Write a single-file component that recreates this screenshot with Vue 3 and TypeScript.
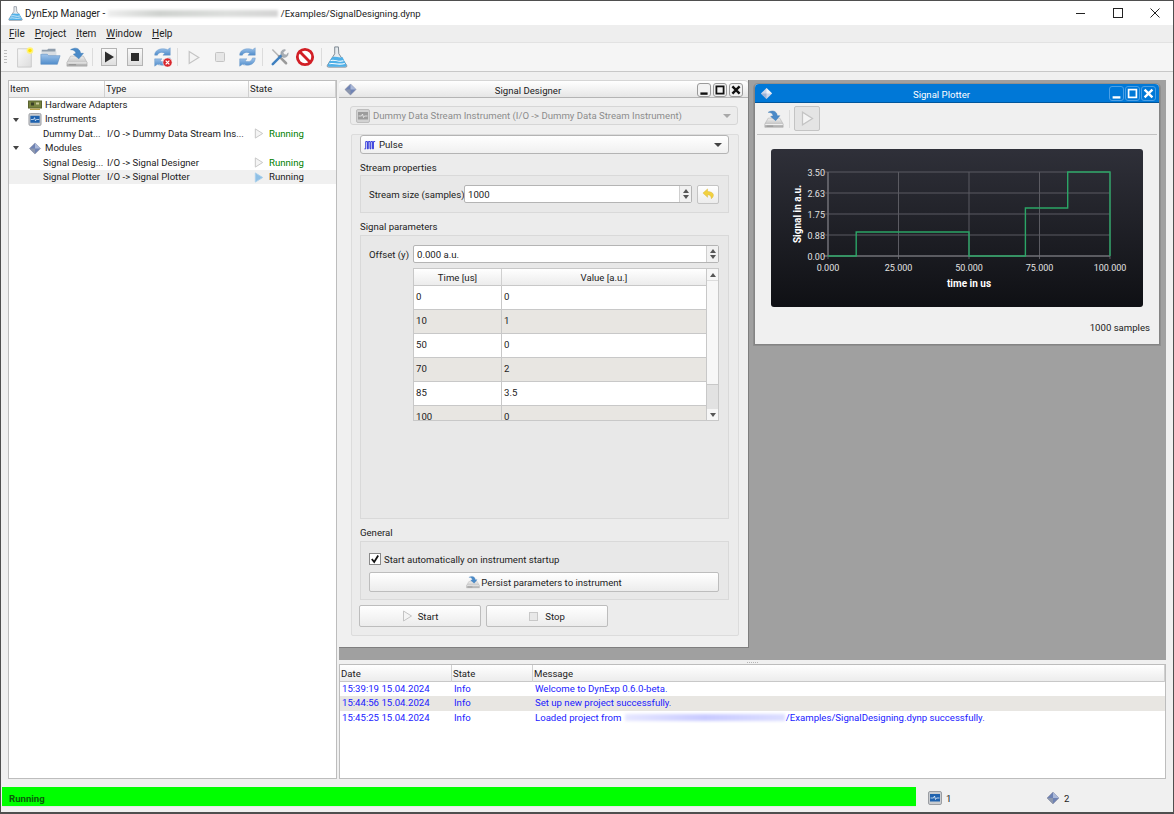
<template>
  <div class="app">
    <!-- icon sprite -->
    <svg class="sprite" width="0" height="0">
      <defs>
        <linearGradient id="gBlue" x1="0" y1="0" x2="0" y2="1">
          <stop offset="0" stop-color="#a0c4ea" />
          <stop offset="1" stop-color="#4f8ccb" />
        </linearGradient>
        <linearGradient id="gDrive" x1="0" y1="0" x2="0" y2="1">
          <stop offset="0" stop-color="#eeeeee" />
          <stop offset="1" stop-color="#adadad" />
        </linearGradient>
        <linearGradient id="gPage" x1="0" y1="0" x2="1" y2="1">
          <stop offset="0" stop-color="#fafafa" />
          <stop offset="1" stop-color="#dcdcdc" />
        </linearGradient>
        <linearGradient id="gBox" x1="0" y1="0" x2="0" y2="1">
          <stop offset="0" stop-color="#fafafa" />
          <stop offset="1" stop-color="#dedede" />
        </linearGradient>
        <symbol id="i-new" viewBox="0 0 24 24">
          <path d="M5 3h12l3 3v17H5z" fill="url(#gPage)" stroke="#c9c9c9" />
          <circle cx="18.500" cy="5" r="3.600" fill="#fff27a" />
          <circle cx="18.500" cy="5" r="1.900" fill="#ffe100" />
        </symbol>
        <symbol id="i-open" viewBox="0 0 24 24">
          <path d="M3 4h6l1-1h8v4H3z" fill="#8f9dac" />
          <path d="M3 6h16v5H3z" fill="#d9dee3" />
          <path d="M2 20V9h7l1.500 1.500H23L20 20z" fill="url(#gBlue)" stroke="#5a8cc0" stroke-width=".6" />
        </symbol>
        <symbol id="i-save" viewBox="0 0 24 24">
          <path d="M5 11h14l4 7v4H1v-4z" fill="url(#gDrive)" stroke="#a8a8a8" stroke-width=".6" />
          <path d="M1.500 18h21v1H1.500z" fill="#f8f8f8" />
          <rect x="3" y="20" width="8" height="1" fill="#8a8a8a" />
          <path d="M5 4c5-3 10-2 11 4h3l-5 6-6-5 3-1c-1-3-3-4-6-4z" fill="#4a8ac8" stroke="#3a76b2" stroke-width=".5" />
        </symbol>
        <symbol id="i-playbox" viewBox="0 0 16 18">
          <rect x=".5" y=".5" width="15" height="17" fill="url(#gBox)" stroke="#b4b4b4" />
          <path d="M4 3.500v11L13 9z" fill="#2d2d2d" />
        </symbol>
        <symbol id="i-stopbox" viewBox="0 0 16 18">
          <rect x=".5" y=".5" width="15" height="17" fill="url(#gBox)" stroke="#b4b4b4" />
          <rect x="4" y="5" width="8" height="8" fill="#2d2d2d" />
        </symbol>
        <symbol id="i-stopdis" viewBox="0 0 10 10">
          <rect x=".5" y=".5" width="9" height="9" rx="1" fill="#e6e6e6" stroke="#c4c4c4" />
        </symbol>
        <symbol id="i-refresh" viewBox="0 0 24 24">
          <path d="M4 10c0-5 5-7 9-7 2 0 4 .500 5 1l3-2v8h-8l2-2c-3-2-7-1-8 2z" fill="url(#gBlue)" stroke="#6a98c8" stroke-width=".5" />
          <path d="M21 13c0 6-5 8-9 8-2 0-4-.500-5-1l-3 2v-8h8l-2 2c3 2 7 1 8-3z" fill="url(#gBlue)" stroke="#6a98c8" stroke-width=".5" />
        </symbol>
        <symbol id="i-reset" viewBox="0 0 24 24">
          <use href="#i-refresh" width="24" height="24" />
          <circle cx="18" cy="18" r="5" fill="#d8262c" stroke="#fff" stroke-width=".6" />
          <path d="M16 16l4 4m0-4l-4 4" stroke="#fff" stroke-width="1.400" />
        </symbol>
        <symbol id="i-tools" viewBox="0 0 24 24">
          <path d="M4 3l8 8" stroke="#b5b5b5" stroke-width="1.800" />
          <path d="M12 11l8.500 8.500" stroke="#9a9a9a" stroke-width="3" stroke-linecap="round" />
          <path d="M4.500 20.500L15 10" stroke="#3f80c0" stroke-width="3" stroke-linecap="round" />
          <path d="M15 10c-2-3 0-7 4-7l1 .5-3 3 1 2.500 3 .5 2-2.500c.500 4-3 7-7 5z" fill="#a8aeb4" stroke="#80868c" stroke-width=".4" />
        </symbol>
        <symbol id="i-block" viewBox="0 0 24 24">
          <circle cx="12" cy="12" r="9.200" fill="#fff" stroke="#d21f26" stroke-width="3.400" />
          <path d="M5.500 5.500l13 13" stroke="#d21f26" stroke-width="3.400" />
        </symbol>
        <symbol id="i-flask" viewBox="0 0 24 24">
          <path d="M9.500 1h4l.500 7.500L22.500 21c.500 1.500 0 2-1.500 2H3c-1.500 0-2-.500-1.500-2L9.500 8.500z" fill="#e6ebef" stroke="#6a7480" stroke-width=".9" />
          <path d="M6 13c4-3 8 1 12-1l4 8.500c.500 1.500 0 2-1 2H3.500c-2 0-2-1-1.500-2z" fill="#4fb0e8" />
          <path d="M5 16c4-2 8 2 14 0M3.500 19.500c4-2 9 2 17-.5" stroke="#fff" fill="none" stroke-width="1.100" />
        </symbol>
        <symbol id="i-adapter" viewBox="0 0 14 10">
          <rect x=".5" y=".5" width="13" height="7" fill="#77823f" stroke="#59622f" />
          <rect x="3" y="2" width="3" height="3" fill="#3a3f26" />
          <rect x="8" y="2" width="3" height="2" fill="#c8c89a" />
          <rect x="2" y="8" width="10" height="1.500" fill="#b6a04a" />
        </symbol>
        <symbol id="i-instr" viewBox="0 0 14 14">
          <rect x=".5" y=".5" width="13" height="13" rx="1.500" fill="#c9ccd0" stroke="#9a9da2" />
          <rect x="2" y="3" width="10" height="7.500" fill="#1f62ae" />
          <path d="M2.500 7h3l1-2 1 3.500 1-1.500h3" stroke="#e6f0fb" fill="none" stroke-width=".8" />
        </symbol>
        <symbol id="i-instrgray" viewBox="0 0 14 14">
          <rect x=".5" y=".5" width="13" height="13" rx="1.500" fill="#d2d2d2" stroke="#bdbdbd" />
          <rect x="2" y="3" width="10" height="7.500" fill="#9c9c9c" />
          <path d="M2.500 7h3l1-2 1 3.500 1-1.500h3" stroke="#eee" fill="none" stroke-width=".8" />
        </symbol>
        <symbol id="i-module" viewBox="0 0 14 14">
          <path d="M7 1l6 6-6 6-6-6z" fill="#6f83b4" stroke="#8d8d9c" stroke-width=".5" />
          <path d="M7 1l6 6H7z" fill="#aab8d8" />
          <path d="M1 7h6v6z" fill="#8d97ad" />
        </symbol>
        <symbol id="i-modulelight" viewBox="0 0 14 14">
          <path d="M7 1l6 6-6 6-6-6z" fill="#cdd6ea" />
          <path d="M7 1l6 6H7z" fill="#f0f3f9" />
          <path d="M1 7h6v6z" fill="#9fb3d6" />
        </symbol>
        <symbol id="i-pulse" viewBox="0 0 14 10">
          <path d="M.5 9.500h1.500V1h2v8.500h1V1h2v8.500h1V1h2v8.500h1V1h2" fill="none" stroke="#1a22d8" stroke-width="1" />
        </symbol>
        <symbol id="i-undo" viewBox="0 0 14 14">
          <path d="M6 1L1 5.500 6 10V7.200c2.500 0 4 1.200 4 4.300 2-1.500 2.500-3 2.200-4.500C11.800 5 9 3.800 6 3.800z" fill="#f2d13e" stroke="#d8b83a" stroke-width=".5" />
        </symbol>
        <symbol id="i-tri" viewBox="0 0 10 12">
          <path d="M1 1v10l8-5z" fill="#f4f4f4" stroke="#c4c4c4" />
        </symbol>
        <symbol id="i-trisel" viewBox="0 0 10 12">
          <path d="M1 1v10l8-5z" fill="#8fc0e6" stroke="#a9cfea" />
        </symbol>
      </defs>
    </svg>

    <header class="titlebar">
      <svg class="title-icon"><use href="#i-flask" /></svg>
      <span class="title-text">DynExp Manager - </span>
      <span class="blur title-blur"></span>
      <span class="title-path">/Examples/SignalDesigning.dynp</span>
      <div class="win-controls">
        <svg class="ctl" viewBox="0 0 12 12"><path d="M1 6.500h9" stroke="#222" /></svg>
        <svg class="ctl" viewBox="0 0 12 12"><rect x="1.500" y="1.500" width="9" height="9" fill="none" stroke="#222" /></svg>
        <svg class="ctl" viewBox="0 0 12 12"><path d="M1.500 1.500l9 9m0-9l-9 9" stroke="#222" /></svg>
      </div>
    </header>

    <nav class="menubar">
      <span v-for="m in menus" :key="m" class="menu-item"><u>{{ m[0] }}</u>{{ m.slice(1) }}</span>
    </nav>

    <div class="toolbar">
      <span class="grip"></span>
      <template v-for="(t, i) in tools" :key="i">
        <span v-if="t.sep" class="tool-sep"></span>
        <span v-else class="tool">
          <svg :class="t.cls || 'tool-icon'"><use :href="'#' + t.icon" /></svg>
        </span>
      </template>
    </div>

    <main class="workspace">
      <section class="tree">
        <div class="tree-head">
          <span>Item</span><span>Type</span><span>State</span>
        </div>
        <div
          v-for="r in treeRows"
          :key="r.name"
          class="tree-row"
          :class="{ selected: r.selected }"
        >
          <span class="tree-name" :class="{ child: !r.icon }">
            <span v-if="r.icon" class="caret"><i v-if="r.open" class="down"></i></span>
            <svg v-if="r.icon" class="tree-icon"><use :href="'#' + r.icon" /></svg>
            {{ r.name }}
          </span>
          <span>{{ r.type }}</span>
          <span v-if="r.state" class="tree-state" :class="{ ok: !r.selected }">
            <svg class="tri"><use :href="r.selected ? '#i-trisel' : '#i-tri'" /></svg>{{ r.state }}
          </span>
        </div>
      </section>

      <div class="right-col">
        <section class="mdi">
          <!-- Signal Designer window -->
          <article class="sub designer">
            <div class="sub-title">
              <svg class="sub-icon"><use href="#i-module" /></svg>
              <span class="sub-caption">Signal Designer</span>
              <span class="sub-btns">
                <span class="sub-btn">
                  <svg viewBox="0 0 10 10"><path d="M2 8h6" stroke="#111" stroke-width="2" /></svg>
                </span>
                <span class="sub-btn">
                  <svg viewBox="0 0 10 10"><rect x="2" y="2" width="6" height="6" fill="none" stroke="#111" stroke-width="1.500" /></svg>
                </span>
                <span class="sub-btn">
                  <svg viewBox="0 0 10 10"><path d="M2 2l6 6m0-6L2 8" stroke="#111" stroke-width="2" /></svg>
                </span>
              </span>
            </div>
            <div class="designer-body">
              <div class="combo combo-disabled">
                <svg class="combo-icon"><use href="#i-instrgray" /></svg>
                <span class="combo-text">Dummy Data Stream Instrument (I/O -&gt; Dummy Data Stream Instrument)</span>
                <span class="combo-arrow faded"></span>
              </div>
              <div class="frame">
                <div class="combo pulse-combo">
                  <svg class="combo-icon pulse"><use href="#i-pulse" /></svg>
                  <span class="combo-text">Pulse</span>
                  <span class="combo-arrow"></span>
                </div>
                <div class="group-label first">Stream properties</div>
                <div class="group group-stream">
                  <span>Stream size (samples)</span>
                  <div class="spin grow">
                    <span class="spin-value">1000</span>
                    <span class="spin-arrows"><i class="up"></i><i class="down"></i></span>
                  </div>
                  <button class="undo-btn"><svg><use href="#i-undo" /></svg></button>
                </div>
                <div class="group-label">Signal parameters</div>
                <div class="group group-signal">
                  <div class="offset-row">
                    <span>Offset (y)</span>
                    <div class="spin grow">
                      <span class="spin-value">0.000 a.u.</span>
                      <span class="spin-arrows"><i class="up"></i><i class="down"></i></span>
                    </div>
                  </div>
                  <div class="grid-wrap">
                    <div class="grid">
                      <div class="grid-head"><span>Time [us]</span><span>Value [a.u.]</span></div>
                      <div v-for="(p, i) in points" :key="p.t" class="grid-row" :class="{ alt: i % 2 === 1 }">
                        <span>{{ p.t }}</span><span>{{ p.v }}</span>
                      </div>
                    </div>
                    <div class="vscroll">
                      <span class="vs-btn"><i class="up"></i></span>
                      <span class="vs-track"></span>
                      <span class="vs-rest"></span>
                      <span class="vs-btn"><i class="down"></i></span>
                    </div>
                  </div>
                </div>
                <div class="group-label">General</div>
                <div class="group group-general">
                  <label class="check-row">
                    <svg class="check" viewBox="0 0 12 12">
                      <rect x=".5" y=".5" width="11" height="11" fill="#fff" stroke="#8a8a8a" />
                      <path d="M2.800 6l2.400 3 4-6.500" fill="none" stroke="#111" stroke-width="1.800" />
                    </svg>
                    Start automatically on instrument startup
                  </label>
                  <button class="btn persist"><svg class="btn-icon"><use href="#i-save" /></svg>Persist parameters to instrument</button>
                </div>
                <div class="action-row">
                  <button class="btn action"><svg class="tri-big"><use href="#i-tri" /></svg>Start</button>
                  <button class="btn action"><span class="stop-mark"></span>Stop</button>
                </div>
              </div>
            </div>
          </article>

          <!-- Signal Plotter window -->
          <article class="sub plotter">
            <div class="plot-title">
              <svg class="sub-icon"><use href="#i-modulelight" /></svg>
              <span class="plot-caption">Signal Plotter</span>
              <span class="sub-btns plot-btns">
                <span class="sub-btn">
                  <svg viewBox="0 0 10 10"><path d="M2 8h6" stroke="#fff" stroke-width="1.800" /></svg>
                </span>
                <span class="sub-btn">
                  <svg viewBox="0 0 10 10"><rect x="2" y="2" width="6" height="6" fill="none" stroke="#fff" stroke-width="1.300" /></svg>
                </span>
                <span class="sub-btn">
                  <svg viewBox="0 0 10 10"><path d="M2 2l6 6m0-6L2 8" stroke="#fff" stroke-width="1.800" /></svg>
                </span>
              </span>
            </div>
            <div class="plot-tools">
              <svg class="plot-save"><use href="#i-save" /></svg>
              <span class="plot-sep"></span>
              <span class="plot-run"><svg><use href="#i-tri" /></svg></span>
            </div>
            <div class="chart">
              <svg width="372" height="158" class="chart-svg">
                <g stroke="#5b5b62" stroke-width="1">
                  <line v-for="x in gridX" :key="'x' + x" :x1="x" :x2="x" y1="23" y2="107" />
                  <line v-for="y in gridY" :key="'y' + y" x1="53" x2="339" :y1="y" :y2="y" />
                  <line v-for="x in gridX" :key="'t' + x" :x1="x" :x2="x" y1="107" y2="110" />
                </g>
                <g stroke="#7c7c82" stroke-width="1">
                  <line x1="57" x2="57" y1="23" y2="107" />
                  <line x1="53" x2="339" y1="107" y2="107" />
                </g>
                <polyline :points="signalPoints" fill="none" stroke="#2ba566" stroke-width="1.400" />
                <g class="tick">
                  <text v-for="(l, i) in yLabels" :key="l" x="54" :y="gridY[i] + 3.500" text-anchor="end">{{ l }}</text>
                  <text v-for="(l, i) in xLabels" :key="l" :x="gridX[i]" y="122" text-anchor="middle">{{ l }}</text>
                </g>
                <text class="axis" x="198" y="138" text-anchor="middle">time in us</text>
                <text class="axis" transform="translate(30 65) rotate(-90)" text-anchor="middle">Signal in a.u.</text>
              </svg>
            </div>
            <div class="plot-foot">1000 samples</div>
          </article>
        </section>

        <div class="splitter"><span></span></div>

        <section class="log">
          <div class="log-head"><span>Date</span><span>State</span><span>Message</span></div>
          <div v-for="(l, i) in logRows" :key="l.date" class="log-row" :class="{ alt: i === 1 }">
            <span>{{ l.date }}</span>
            <span>Info</span>
            <span class="log-msg">
              {{ l.msg }}
              <template v-if="l.path">
                <span class="blur log-blur"></span>{{ l.path }}
              </template>
            </span>
          </div>
        </section>
      </div>
    </main>

    <footer class="statusbar">
      <div class="status-green">Running</div>
      <div class="status-item first"><svg class="status-icon"><use href="#i-instr" /></svg>1</div>
      <div class="status-item second"><svg class="status-icon"><use href="#i-module" /></svg>2</div>
    </footer>
  </div>
</template>

<script setup lang="ts">
import { computed } from 'vue'

interface Tool {
  icon?: string
  sep?: boolean
  cls?: string
}

interface TreeRow {
  name: string
  type?: string
  state?: string
  icon?: string
  open?: boolean
  selected?: boolean
}

const menus = ['File', 'Project', 'Item', 'Window', 'Help']

const tools: Tool[] = [
  { icon: 'i-new' },
  { icon: 'i-open' },
  { icon: 'i-save' },
  { sep: true },
  { icon: 'i-playbox', cls: 'tool-boxed' },
  { icon: 'i-stopbox', cls: 'tool-boxed' },
  { icon: 'i-reset' },
  { sep: true },
  { icon: 'i-tri', cls: 'tool-tri' },
  { icon: 'i-stopdis', cls: 'tool-stop' },
  { icon: 'i-refresh' },
  { sep: true },
  { icon: 'i-tools', cls: 'tool-small' },
  { icon: 'i-block', cls: 'tool-small' },
  { sep: true },
  { icon: 'i-flask' },
]

const treeRows: TreeRow[] = [
  { name: 'Hardware Adapters', icon: 'i-adapter' },
  { name: 'Instruments', icon: 'i-instr', open: true },
  { name: 'Dummy Dat...', type: 'I/O -> Dummy Data Stream Ins...', state: 'Running' },
  { name: 'Modules', icon: 'i-module', open: true },
  { name: 'Signal Desig...', type: 'I/O -> Signal Designer', state: 'Running' },
  { name: 'Signal Plotter', type: 'I/O -> Signal Plotter', state: 'Running', selected: true },
]

const points = [
  { t: '0', v: '0' },
  { t: '10', v: '1' },
  { t: '50', v: '0' },
  { t: '70', v: '2' },
  { t: '85', v: '3.5' },
  { t: '100', v: '0' },
]

const logRows = [
  { date: '15:39:19 15.04.2024', msg: 'Welcome to DynExp 0.6.0-beta.', path: '' },
  { date: '15:44:56 15.04.2024', msg: 'Set up new project successfully.', path: '' },
  { date: '15:45:25 15.04.2024', msg: 'Loaded project from', path: '/Examples/SignalDesigning.dynp successfully.' },
]

const gridX = [57, 127.5, 198, 268.5, 339]
const gridY = [23, 44, 65, 86, 107]
const xLabels = ['0.000', '25.000', '50.000', '75.000', '100.000']
const yLabels = ['3.50', '2.63', '1.75', '0.88', '0.00']

// pulse shape from the table, drawn as steps
const signalPoints = computed(() => {
  const steps: [number, number][] = [
    [0, 0], [10, 0], [10, 1], [50, 1], [50, 0], [70, 0],
    [70, 2], [85, 2], [85, 3.5], [100, 3.5], [100, 0],
  ]
  return steps.map(([t, v]) => `${57 + t * 2.82},${107 - v * 24}`).join(' ')
})
</script>

<style>
html,
body {
  margin: 0;
  background: #f0f0f0;
}
</style>

<style scoped>
.app {
  width: 1174px;
  height: 814px;
  box-sizing: border-box;
  border: 1px solid #4f4f4f;
  border-bottom-width: 2px;
  display: flex;
  flex-direction: column;
  background: #f0f0f0;
  font-family: Roboto, sans-serif;
  font-size: 9.6px;
  color: #222;
  overflow: hidden;
}
.sprite {
  position: absolute;
}
.blur {
  display: inline-block;
  background: linear-gradient(90deg, #eeeeee, #cfd2cf 30%, #dcdedc 70%, #d4d4d4);
  filter: blur(1.5px);
}
.titlebar {
  height: 24px;
  flex: none;
  background: #fff;
  display: flex;
  align-items: center;
  padding-left: 7px;
  font-size: 10px;
  color: #222;
  white-space: pre;
}
.title-icon {
  width: 15px;
  height: 15px;
  margin-right: 2px;
}
.title-blur {
  width: 170px;
  height: 7px;
  margin: 0 3px 0 0;
}
.title-path {
  font-size: 9.5px;
}
.win-controls {
  margin-left: auto;
  display: flex;
  gap: 25px;
  margin-right: 12px;
}
.ctl {
  width: 12px;
  height: 12px;
  display: block;
}
.menubar {
  height: 17px;
  flex: none;
  display: flex;
  align-items: center;
  gap: 10px;
  padding-left: 8px;
  background: #eeeeee;
  border-bottom: 1px solid #e2e2e2;
  font-size: 10px;
}
.toolbar {
  height: 28px;
  flex: none;
  display: flex;
  align-items: center;
  padding-left: 3px;
  background: #f5f5f5;
  border-bottom: 1px solid #c8c8c8;
}
.grip {
  width: 3px;
  height: 16px;
  margin-right: 4px;
  background-image: radial-gradient(#bdbdbd 0.7px, transparent 0.8px);
  background-size: 2px 3px;
}
.tool {
  width: 26.3px;
  height: 24px;
  display: flex;
  align-items: center;
  justify-content: center;
}
.tool-icon {
  width: 22px;
  height: 22px;
}
.tool-small {
  width: 20px;
  height: 20px;
}
.tool-boxed {
  width: 16px;
  height: 18px;
}
.tool-tri {
  width: 12px;
  height: 15px;
}
.tool-stop {
  width: 10px;
  height: 10px;
}
.tool-sep {
  width: 6px;
  height: 18px;
  box-sizing: border-box;
  background: linear-gradient(#dcdcdc, #dcdcdc) no-repeat center / 1px 100%;
}
.workspace {
  flex: 1;
  min-height: 0;
  display: flex;
  gap: 2px;
  padding: 8px 6px 8px 7px;
}
.tree {
  width: 329px;
  flex: none;
  box-sizing: border-box;
  background: #fff;
  border: 1px solid #bdbdbd;
}
.tree-head {
  height: 16px;
  display: grid;
  grid-template-columns: 96px 144px 1fr;
  align-items: center;
  background: linear-gradient(#ffffff, #ececec);
  border-bottom: 1px solid #c8c8c8;
}
.tree-head span {
  padding-left: 1px;
  height: 100%;
  line-height: 16px;
  border-right: 1px solid #d0d0d0;
}
.tree-row {
  height: 14.4px;
  line-height: 14.4px;
  display: grid;
  grid-template-columns: 96px 144px 1fr;
  white-space: nowrap;
}
.tree-row > span {
  padding-left: 2px;
}
.tree-row.selected {
  background: #f0f0f0;
}
.tree-row > .tree-name {
  display: flex;
  align-items: center;
  padding-left: 0;
}
.tree-row > .tree-name.child {
  padding-left: 34px;
}
.caret {
  width: 19px;
  padding-left: 4px;
  box-sizing: border-box;
  flex: none;
}
.caret i.down {
  border-top-color: #444;
}
.tree-icon {
  width: 14px;
  height: 13px;
  margin-right: 3px;
  flex: none;
}
.tree-state {
  display: flex;
  align-items: center;
}
.tree-state.ok {
  color: #008000;
}
.tri {
  width: 10px;
  height: 11px;
  margin: 0 5px 0 3px;
}
.right-col {
  width: 827px;
  flex: none;
  display: flex;
  flex-direction: column;
}
.mdi {
  height: 580px;
  flex: none;
  background: #a0a0a0;
  position: relative;
}
.sub {
  position: absolute;
  box-sizing: border-box;
  background: #f0f0f0;
}
.designer {
  left: 0;
  top: 0;
  width: 410px;
  height: 568px;
  border-right: 1px solid #7f7f7f;
  border-bottom: 1px solid #7f7f7f;
  display: flex;
  flex-direction: column;
}
.sub-title {
  height: 18px;
  box-sizing: border-box;
  flex: none;
  display: flex;
  align-items: center;
  position: relative;
  background: linear-gradient(#ffffff, #e6e6e6);
  border-top: 1px solid #d5d5d5;
  border-bottom: 1px solid #b4b4b4;
  border-radius: 4px 4px 0 0;
}
.sub-icon {
  width: 13px;
  height: 13px;
  margin-left: 5px;
}
.sub-caption,
.plot-caption {
  position: absolute;
  left: 0;
  right: 31px;
  text-align: center;
  pointer-events: none;
  padding-top: 2px;
}
.sub-btns {
  margin-left: auto;
  margin-right: 5px;
  margin-top: 2px;
  display: flex;
  gap: 2px;
  position: relative;
}
.sub-btn {
  width: 12px;
  height: 12px;
  border: 1px solid #9a9a9a;
  border-radius: 3px;
  background: #f2f2f2;
  display: block;
}
.sub-btn svg {
  display: block;
  width: 100%;
  height: 100%;
}
.designer-body {
  flex: 1;
  min-height: 0;
  display: flex;
  flex-direction: column;
  padding: 8px 9px 11px 11px;
}
.combo {
  height: 19px;
  box-sizing: border-box;
  border: 1px solid #c4c4c4;
  border-radius: 3px;
  background: linear-gradient(#ffffff, #ececec);
  display: flex;
  align-items: center;
  padding-left: 5px;
  flex: none;
}
.combo-disabled {
  color: #8c8c8c;
  background: #ececec;
  border-color: #d6d6d6;
  width: 388px;
  margin-bottom: 9px;
}
.combo-icon {
  width: 14px;
  height: 14px;
  margin-right: 3px;
  flex: none;
}
.combo-icon.pulse {
  width: 12px;
  height: 10px;
}
.combo-arrow {
  margin-left: auto;
  margin-right: 6px;
  width: 0;
  height: 0;
  border: 4px solid transparent;
  border-top-color: #444;
  border-bottom-width: 0;
}
.combo-arrow.faded {
  border-top-color: #a8a8a8;
}
.frame {
  flex: 1;
  min-height: 0;
  box-sizing: border-box;
  width: 388px;
  margin-left: 1px;
  border: 1px solid #dcdcdc;
  border-radius: 2px;
  background: #ececec;
  padding: 0 9px 8px 8px;
  display: flex;
  flex-direction: column;
}
.pulse-combo {
  border-color: #b4b4b4;
  background: linear-gradient(#ffffff, #f0f0f0);
  padding-left: 3px;
}
.group-label {
  height: 14px;
  line-height: 16px;
  margin: 6px 0 2px;
  flex: none;
}
.group-label.first {
  margin: 6px 0 1px;
}
.group {
  box-sizing: border-box;
  border: 1px solid #d9d9d9;
  background: #e8e8e8;
  flex: none;
  padding: 0 9px 0 8px;
}
.group-stream {
  height: 38px;
  display: flex;
  align-items: center;
}
.group-stream > span:first-child {
  width: 95px;
  flex: none;
  white-space: nowrap;
}
.grow {
  flex: 1;
  min-width: 0;
}
.spin {
  height: 18px;
  box-sizing: border-box;
  background: #fff;
  border: 1px solid #b4b4b4;
  border-radius: 2px;
  display: flex;
  align-items: center;
  padding-left: 3px;
}
.spin-arrows {
  margin-left: auto;
  width: 11px;
  height: 100%;
  border-left: 1px solid #cfcfcf;
  background: #f1f1f1;
  display: flex;
  flex-direction: column;
  align-items: center;
  justify-content: center;
  gap: 2px;
}
i.up,
i.down {
  display: block;
  width: 0;
  height: 0;
  border-left: 3.5px solid transparent;
  border-right: 3.5px solid transparent;
}
i.up {
  border-bottom: 4px solid #555;
}
i.down {
  border-top: 4px solid #555;
}
.undo-btn {
  width: 22px;
  height: 19px;
  margin-left: 5px;
  padding: 0;
  flex: none;
  border: 1px solid #c4c4c4;
  border-radius: 2px;
  background: linear-gradient(#fff, #ececec);
  display: flex;
  align-items: center;
  justify-content: center;
}
.undo-btn svg {
  width: 13px;
  height: 13px;
}
.group-signal {
  height: 284px;
  padding-top: 9px;
}
.offset-row {
  display: flex;
  align-items: center;
}
.offset-row > span:first-child {
  width: 44px;
  flex: none;
  white-space: nowrap;
}
.grid-wrap {
  margin: 5px 0 0 44px;
  height: 153px;
  box-sizing: border-box;
  border: 1px solid #c8c8c8;
  display: flex;
  background: #fff;
}
.grid {
  flex: 1;
  min-width: 0;
  overflow: hidden;
}
.grid-head {
  height: 16px;
  display: grid;
  grid-template-columns: 88px 1fr;
  background: linear-gradient(#ffffff, #ececec);
  border-bottom: 1px solid #c8c8c8;
  text-align: center;
  line-height: 17px;
}
.grid-head span:first-child {
  border-right: 1px solid #d0d0d0;
}
.grid-row {
  height: 24px;
  box-sizing: border-box;
  display: grid;
  grid-template-columns: 88px 1fr;
  line-height: 22px;
  border-bottom: 1px solid #c8c8c8;
  background: #fff;
}
.grid-row.alt {
  background: #e8e6e2;
}
.grid-row span {
  padding-left: 2px;
}
.grid-row span:first-child {
  border-right: 1px solid #c8c8c8;
}
.vscroll {
  width: 11px;
  flex: none;
  display: flex;
  flex-direction: column;
  border-left: 1px solid #c8c8c8;
}
.vs-btn {
  height: 11px;
  flex: none;
  display: flex;
  align-items: center;
  justify-content: center;
  background: #f6f6f6;
}
.vs-track {
  flex: 1;
  background: #f7f7f7;
  border-top: 1px solid #dcdcdc;
  border-bottom: 1px solid #c8c8c8;
}
.vs-rest {
  height: 24px;
  flex: none;
  background: #e2e2e2;
}
.group-general {
  height: 59px;
  padding: 9px 9px 0 8px;
}
.check-row {
  display: flex;
  align-items: center;
  height: 16px;
}
.check {
  width: 12px;
  height: 12px;
  margin-right: 3px;
}
.btn {
  font: inherit;
  color: inherit;
  border: 1px solid #bdbdbd;
  border-radius: 2px;
  background: linear-gradient(#ffffff, #ececec);
  display: flex;
  align-items: center;
  justify-content: center;
  padding: 0;
}
.persist {
  width: 100%;
  height: 20px;
  margin-top: 5px;
  gap: 1px;
}
.btn-icon {
  width: 14px;
  height: 14px;
}
.action-row {
  display: flex;
  gap: 5px;
  margin-top: 5px;
  margin-left: -1px;
}
.action {
  width: 122px;
  height: 22px;
  gap: 5px;
}
.tri-big {
  width: 11px;
  height: 12px;
}
.stop-mark {
  width: 7px;
  height: 7px;
  border: 1px solid #c8c8c8;
  background: #e8e8e8;
  margin-right: 2px;
}
.plotter {
  left: 415px;
  top: 4px;
  width: 406px;
  height: 261px;
  border: 1px solid #848484;
  border-top: 0;
  border-radius: 4px 4px 0 0;
  display: flex;
  flex-direction: column;
  box-shadow: 0 0 0 1px #8f8f8f;
}
.plot-title {
  height: 19px;
  flex: none;
  background: #0078d7;
  border-radius: 4px 4px 0 0;
  border-bottom: 1px solid #00569c;
  display: flex;
  align-items: center;
  position: relative;
  box-sizing: border-box;
}
.plot-caption {
  color: #fff;
}
.plot-btns {
  gap: 1px;
  margin-right: 3px;
  margin-top: 0;
}
.plot-btns .sub-btn {
  width: 13px;
  height: 13px;
  background: #0078d7;
  border-color: #4ca0e6;
}
.plot-tools {
  height: 31px;
  flex: none;
  margin: 0 2px;
  display: flex;
  align-items: center;
  padding-left: 7px;
  border-bottom: 1px solid #c2c2c2;
}
.plot-save {
  width: 20px;
  height: 20px;
}
.plot-sep {
  width: 1px;
  height: 18px;
  margin: 0 4px 0 5px;
  background: #dcdcdc;
}
.plot-run {
  width: 26px;
  height: 25px;
  box-sizing: border-box;
  border: 1px solid #c4c4c4;
  border-radius: 2px;
  background: #e4e4e4;
  display: flex;
  align-items: center;
  justify-content: center;
}
.plot-run svg {
  width: 13px;
  height: 15px;
}
.chart {
  margin: 14px 0 0 16px;
  width: 372px;
  height: 158px;
  flex: none;
  border-radius: 3px;
  background: linear-gradient(#2f3039, #0f1014);
}
.chart-svg {
  display: block;
}
.tick text {
  fill: #e2e2e2;
  font-size: 9px;
}
.axis {
  fill: #fff;
  font-size: 10px;
  font-weight: 700;
}
.plot-foot {
  text-align: right;
  padding-right: 9px;
  margin-top: 15px;
}
.splitter {
  height: 4px;
  flex: none;
  display: flex;
  justify-content: center;
  align-items: center;
}
.splitter span {
  width: 12px;
  height: 1px;
  background-image: linear-gradient(90deg, #b5b5b5 50%, transparent 50%);
  background-size: 2px 1px;
}
.log {
  flex: 1;
  min-height: 0;
  background: #fff;
  border: 1px solid #bdbdbd;
  box-sizing: border-box;
}
.log-head {
  height: 16px;
  display: grid;
  grid-template-columns: 112px 81px 1fr;
  line-height: 17px;
  background: linear-gradient(#ffffff, #ececec);
  border-bottom: 1px solid #c8c8c8;
}
.log-head span {
  padding-left: 1px;
  border-right: 1px solid #d0d0d0;
}
.log-row {
  height: 14.4px;
  line-height: 14.4px;
  display: grid;
  grid-template-columns: 112px 81px 1fr;
  color: #1a1aff;
  white-space: nowrap;
}
.log-row span {
  padding-left: 2px;
}
.log-row.alt {
  background: #e8e6e2;
}
.log-blur {
  width: 160px;
  height: 7px;
  margin: 0 1px;
  padding: 0 !important;
  background: linear-gradient(90deg, #e6e7ff, #c8caff 50%, #dcdeff);
}
.statusbar {
  height: 25px;
  flex: none;
  display: flex;
  align-items: flex-start;
  padding-left: 1px;
}
.status-green {
  width: 914px;
  height: 20px;
  background: #00ff00;
  line-height: 23px;
  padding-left: 7px;
  box-sizing: border-box;
  font-weight: 700;
  color: #0b5c0b;
  border: 1px solid #e6e6e6;
  border-width: 0 0 1px;
}
.status-item {
  display: flex;
  align-items: center;
  gap: 4px;
  height: 22px;
}
.status-item.first {
  margin-left: 12px;
  width: 118px;
}
.status-item.second {
  width: 60px;
}
.status-icon {
  width: 14px;
  height: 14px;
}
</style>
